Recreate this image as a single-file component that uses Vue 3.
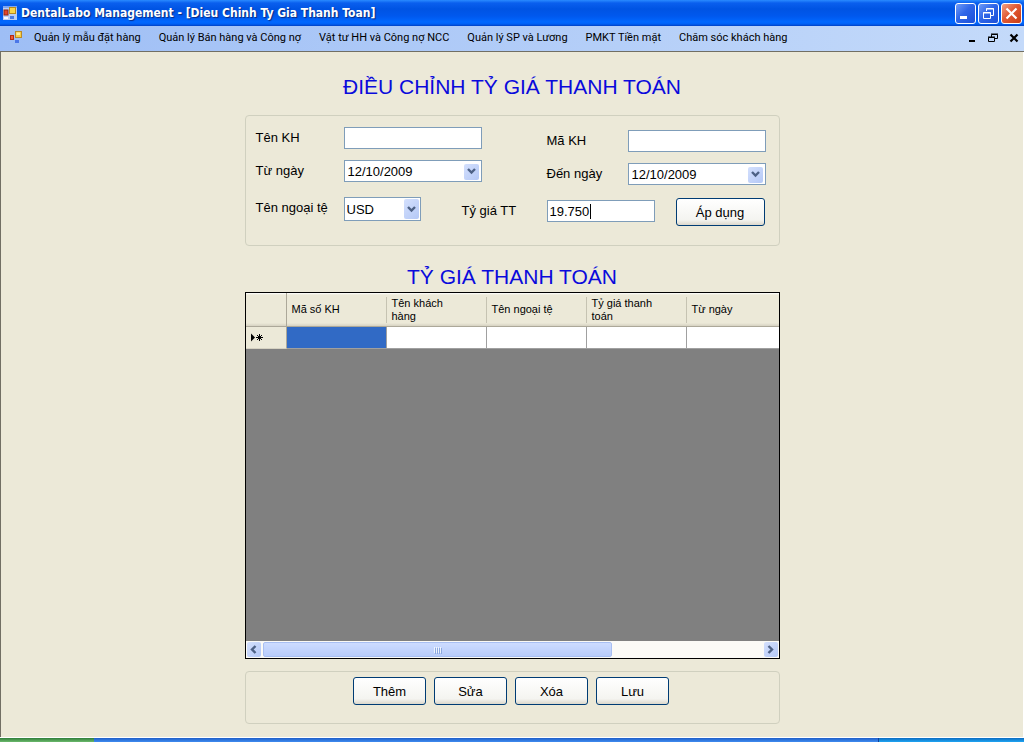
<script setup>
import { ref } from 'vue'

const menus = [
  'Quản lý mẫu đặt hàng',
  'Quản lý Bán hàng và Công nợ',
  'Vật tư HH và Công nợ NCC',
  'Quản lý SP và Lương',
  'PMKT Tiền mặt',
  'Chăm sóc khách hàng',
]
const columns = ['Mã số KH', 'Tên khách hàng', 'Tên ngoại tệ', 'Tỷ giá thanh toán', 'Từ ngày']
const actions = ['Thêm', 'Sửa', 'Xóa', 'Lưu']

const customerName = ref('')
const customerCode = ref('')
const fromDate = ref('12/10/2009')
const toDate = ref('12/10/2009')
const currency = ref('USD')
const rate = ref('19.750')
</script>

<template>
  <div class="window">
    <header class="titlebar">
      <svg class="app-icon" width="14" height="14" viewBox="0 0 14 14" aria-hidden="true">
        <rect width="14" height="14" fill="#b9cdf5" />
        <path d="M0 0H14V2H0Z" fill="#7fa6f0" />
        <rect x="1" y="4" width="4" height="5" fill="#e0442a" stroke="#8e2416" />
        <rect x="6.500" y="1.500" width="6" height="6" fill="#f9d54a" stroke="#b98a1c" />
        <rect x="7" y="10" width="4" height="3" fill="#4a7be6" />
        <path d="M1 11H5V13H1Z" fill="#f6f8ff" />
      </svg>
      <h1 class="title">DentalLabo Management - [Dieu Chinh Ty Gia Thanh Toan]</h1>
      <div class="captions">
        <button class="caption" type="button" aria-label="Minimize">
          <svg width="19" height="19" viewBox="0 0 19 19"><path d="M4 12H11V15H4Z" fill="#fff" /></svg>
        </button>
        <button class="caption" type="button" aria-label="Restore">
          <svg width="19" height="19" viewBox="0 0 19 19" fill="none" stroke="#fff">
            <path d="M7.500 7V4.500H14.500V11.500H12M7 5H15M4.500 8.500H11.500V14.500H4.500ZM4 9H12" />
          </svg>
        </button>
        <button class="caption close" type="button" aria-label="Close">
          <svg width="19" height="19" viewBox="0 0 19 19"><path d="M4.500 4.500L14.500 14.500M14.500 4.500L4.500 14.500" stroke="#fff" stroke-width="2.200" /></svg>
        </button>
      </div>
    </header>

    <nav class="menubar">
      <svg class="child-icon" width="14" height="13" viewBox="0 0 14 13" aria-hidden="true">
        <rect x="1.500" y="4.500" width="3" height="4" fill="#ee5a36" stroke="#b02c18" />
        <rect x="6.500" y="0.500" width="6" height="6" fill="#f7ce45" stroke="#b8892a" />
        <path d="M7.500 1.500H11V4H7.500Z" fill="#fdeea0" />
        <rect x="6" y="9" width="4" height="3" fill="#4b76e8" />
      </svg>
      <button v-for="m in menus" :key="m" class="menu" type="button">{{ m }}</button>
      <div class="child-controls">
        <button type="button" aria-label="Minimize child">
          <svg width="10" height="10" viewBox="0 0 10 10"><path d="M2 7H8V9H2Z" fill="#000" /></svg>
        </button>
        <button type="button" aria-label="Restore child">
          <svg width="10" height="10" viewBox="0 0 10 10" fill="none" stroke="#000">
            <path d="M3.500 4V1.500H9.500V5.500H7M3 1H10M0.500 4.500H6.500V8.500H0.500ZM0 4H7" />
          </svg>
        </button>
        <button type="button" aria-label="Close child">
          <svg width="10" height="10" viewBox="0 0 10 10"><path d="M1.500 1.500L8.500 8.500M8.500 1.500L1.500 8.500" stroke="#000" stroke-width="2.200" /></svg>
        </button>
      </div>
    </nav>

    <main class="client">
      <div class="form">
        <h2 class="heading">ĐIỀU CHỈNH TỶ GIÁ THANH TOÁN</h2>

        <section class="group fields">
          <label for="name">Tên KH</label>
          <input id="name" v-model="customerName" class="box wide" type="text" />
          <label class="lower" for="code">Mã KH</label>
          <input id="code" v-model="customerCode" class="box wide lower" type="text" />

          <label for="from">Từ ngày</label>
          <div class="box wide picker">
            <input id="from" v-model="fromDate" type="text" />
            <button class="drop" type="button" aria-label="Chọn từ ngày">
              <svg width="9" height="7" viewBox="0 0 9 7"><path d="M1 1L4.500 4.500L8 1" fill="none" stroke="#4d6185" stroke-width="2.400" /></svg>
            </button>
          </div>
          <label class="lower" for="to">Đến ngày</label>
          <div class="box wide picker lower">
            <input id="to" v-model="toDate" type="text" />
            <button class="drop" type="button" aria-label="Chọn đến ngày">
              <svg width="9" height="7" viewBox="0 0 9 7"><path d="M1 1L4.500 4.500L8 1" fill="none" stroke="#4d6185" stroke-width="2.400" /></svg>
            </button>
          </div>

          <label for="currency">Tên ngoại tệ</label>
          <div class="currency-cell">
            <div class="combo">
              <select id="currency" v-model="currency" class="box">
                <option>USD</option>
              </select>
              <span class="drop">
                <svg width="9" height="7" viewBox="0 0 9 7"><path d="M1 1L4.500 4.500L8 1" fill="none" stroke="#4d6185" stroke-width="2.400" /></svg>
              </span>
            </div>
            <label class="lower" for="rate">Tỷ giá TT</label>
          </div>
          <div class="rate-cell">
            <div class="box rate lower">
              <input id="rate" v-model="rate" type="text" size="4" />
              <span class="caret"></span>
            </div>
            <button class="push apply" type="button">Áp dụng</button>
          </div>
        </section>

        <h2 class="heading second">TỶ GIÁ THANH TOÁN</h2>

        <section class="datagrid">
          <table>
            <colgroup>
              <col class="c-head" />
              <col v-for="c in columns" :key="c" class="c-data" />
            </colgroup>
            <thead>
              <tr>
                <th class="corner"></th>
                <th v-for="c in columns" :key="c" scope="col"><div>{{ c }}</div></th>
              </tr>
            </thead>
            <tbody>
              <tr>
                <th class="rowhead" scope="row">
                  <svg width="14" height="10" viewBox="0 0 14 10" aria-label="Dòng mới">
                    <path d="M1 0.500L5 4.500L1 8.500Z" fill="#000" />
                    <path d="M9.500 1V8M6 4.500H13M7 2L12 7M12 2L7 7" stroke="#000" />
                  </svg>
                </th>
                <td v-for="(c, i) in columns" :key="c" :class="{ selected: i === 0 }"></td>
              </tr>
            </tbody>
          </table>
          <div class="void"></div>
          <div class="scrollbar">
            <button class="arrow" type="button" aria-label="Cuộn trái">
              <svg width="7" height="9" viewBox="0 0 7 9"><path d="M5.500 1L2 4.500L5.500 8" fill="none" stroke="#4d6185" stroke-width="2.400" /></svg>
            </button>
            <div class="track">
              <div class="thumb"><i></i><i></i><i></i><i></i></div>
            </div>
            <button class="arrow" type="button" aria-label="Cuộn phải">
              <svg width="7" height="9" viewBox="0 0 7 9"><path d="M1.500 1L5 4.500L1.500 8" fill="none" stroke="#4d6185" stroke-width="2.400" /></svg>
            </button>
          </div>
        </section>

        <section class="group actions">
          <button v-for="a in actions" :key="a" class="push" type="button">{{ a }}</button>
        </section>
      </div>
    </main>

    <footer class="taskbar">
      <div class="start"></div>
      <div class="tasks"></div>
      <div class="tray"></div>
    </footer>
  </div>
</template>

<style>
body {
  margin: 0;
}
</style>

<style scoped>
* {
  box-sizing: border-box;
}
.window {
  display: flex;
  flex-direction: column;
  min-height: 100vh;
  background: #ece9d8;
  color: #000;
  font-family: "Liberation Sans", Arial, sans-serif;
  font-size: 14px;
}
button,
input,
select {
  margin: 0;
  padding: 0;
  border: 0;
  color: inherit;
  font-family: inherit;
}
svg {
  display: block;
}

.titlebar {
  display: flex;
  align-items: center;
  height: 26px;
  padding: 0 2px 0 3px;
  background: linear-gradient(#2a8bff 0, #0a5fee 3px, #0054e3 9px, #0058ee 16px, #0068ff 22px, #0060f4 24px, #0040c4 26px);
}
.title {
  flex: 1;
  margin: 0 0 0 4px;
  color: #fff;
  font-family: "DejaVu Sans Condensed", "DejaVu Sans", sans-serif;
  font-size: 12px;
  font-weight: bold;
  line-height: 26px;
  white-space: nowrap;
  text-shadow: 1px 1px 1px #0a2a80;
}
.captions {
  display: flex;
  gap: 2px;
}
.caption {
  width: 21px;
  height: 21px;
  border: 1px solid #fff;
  border-radius: 3px;
  background: linear-gradient(135deg, #6f9bf8, #2f66e8 45%, #1c4fd8);
}
.caption.close {
  background: linear-gradient(135deg, #f0a184, #e25a35 45%, #c83c14);
}

.menubar {
  display: flex;
  align-items: center;
  height: 26px;
  padding: 0 5px 2px 9px;
  border-bottom: 1px solid #716f64;
  background: linear-gradient(90deg, #9ebef5, #c4dafa);
}
.child-icon {
  margin-right: 11px;
}
.menu {
  margin-right: 18px;
  background: none;
  font-family: Roboto, sans-serif;
  font-size: 11px;
  line-height: 22px;
  white-space: nowrap;
}
.child-controls {
  display: flex;
  gap: 11px;
  margin-left: auto;
}
.child-controls button {
  width: 10px;
  background: none;
}

.client {
  display: flex;
  flex: 1;
  justify-content: center;
  padding: 19px 0 13px 1px;
  border: solid #fff;
  border-width: 0 1px 1px 0;
  box-shadow: inset 1px 0 #716f64;
}
.form {
  display: flex;
  flex-direction: column;
  width: 535px;
}
.heading {
  margin: 0;
  color: #0a0adc;
  font-size: 21px;
  font-weight: normal;
  line-height: 32px;
  text-align: center;
}
.second {
  margin-top: 15px;
  line-height: 31px;
}
.group {
  border: 1px solid #d0d0bf;
  border-radius: 4px;
}
.fields {
  display: grid;
  grid-template-columns: 88px 203px 81px 1fr;
  grid-template-rows: 33px 37px 30px;
  align-items: start;
  margin-top: 12px;
  padding: 11px 10px 18px;
}
.fields label {
  font-size: 13px;
  line-height: 22px;
  white-space: nowrap;
}
.lower {
  margin-top: 3px;
}
.box {
  height: 22px;
  border: 1px solid #7f9db9;
  background: #fff;
  font-size: 13px;
}
input.box {
  padding: 0 3px;
}
.wide {
  width: 138px;
}
.picker {
  display: flex;
  align-items: center;
  padding: 1px 2px 0 3px;
}
.picker input {
  flex: 1;
  min-width: 0;
  font-size: 13px;
  line-height: 19px;
}
.drop {
  display: flex;
  align-items: center;
  justify-content: center;
  width: 15px;
  height: 16px;
  border-radius: 2px;
  background: linear-gradient(135deg, #d4e0fd, #b4c8f6);
}
.currency-cell {
  display: flex;
  gap: 41px;
}
.combo {
  position: relative;
  width: 77px;
}
.combo select {
  width: 100%;
  height: 24px;
  padding: 0 2px;
  border-radius: 0;
  appearance: none;
}
.combo .drop {
  position: absolute;
  top: 2px;
  right: 2px;
  height: 20px;
  pointer-events: none;
}
.rate-cell {
  display: flex;
  grid-column: 3 / 5;
  gap: 21px;
}
.rate {
  display: flex;
  align-items: center;
  width: 108px;
  padding: 0 2px;
}
.rate input {
  width: 40px;
  font-size: 13px;
}
.caret {
  width: 1px;
  height: 15px;
  background: #000;
}
.push {
  width: 73px;
  height: 28px;
  border: 1px solid #003c74;
  border-radius: 3px;
  background: linear-gradient(#fff, #f4f4f0 80%, #dcd8cc);
  font-size: 13px;
}
.apply {
  width: 89px;
  margin-top: 1px;
}

.datagrid {
  display: flex;
  flex: 1;
  flex-direction: column;
  min-height: 160px;
  overflow: hidden;
  border: 1px solid #000;
  background: #808080;
}
table {
  width: 541px;
  border-collapse: separate;
  border-spacing: 0;
  table-layout: fixed;
  font-size: 11px;
}
.c-head {
  width: 41px;
}
.c-data {
  width: 100px;
}
thead th {
  height: 34px;
  padding: 0;
  border-bottom: 1px solid #aca899;
  background: linear-gradient(#fff 0, #ece9d8 2px, #ece9d8 30px, #d6d2c2 33px);
  font-weight: normal;
  line-height: 13px;
  text-align: left;
}
thead th div {
  display: flex;
  align-items: center;
  height: 26px;
  padding: 0 28px 0 5px;
  border-right: 1px solid #c6c3b2;
  box-shadow: 1px 0 #fff;
}
thead th:nth-child(n + 4) div {
  padding-right: 20px;
}
.corner,
.rowhead {
  border-right: 1px solid #aca899;
}
.rowhead {
  padding: 0 0 0 4px;
  border-bottom: 1px solid #d6d2c2;
  background: #ece9d8;
}
tbody td {
  height: 22px;
  padding: 0;
  border-right: 1px solid #a0a0a0;
  border-bottom: 1px solid #a0a0a0;
  background: #fff;
}
tbody td.selected {
  background: #316ac5;
}
.void {
  flex: 1;
}
.scrollbar {
  display: flex;
  height: 17px;
  padding: 1px;
  background: #fbfaf6;
}
.arrow {
  display: flex;
  align-items: center;
  justify-content: center;
  width: 14px;
  border-radius: 2px;
  background: linear-gradient(135deg, #d4e0fd, #b4c8f6);
}
.track {
  flex: 1;
  padding: 0 2px;
}
.thumb {
  display: flex;
  align-items: center;
  justify-content: center;
  gap: 1px;
  width: 70%;
  height: 15px;
  border: 1px solid #a8bff2;
  border-radius: 2px;
  background: linear-gradient(#cddcff, #b8ccfb);
}
.thumb i {
  width: 1px;
  height: 6px;
  background: #eef4fe;
  box-shadow: 1px 1px #8ca8e0;
}
.actions {
  display: flex;
  justify-content: center;
  gap: 8px;
  height: 53px;
  margin-top: 12px;
  padding: 5px 2px 0 0;
}

.taskbar {
  display: flex;
  height: 4px;
}
.start {
  width: 94px;
  background: linear-gradient(#2f7d3a, #6cba6c);
}
.tasks {
  flex: 1;
  background: linear-gradient(#1f5fc8, #3f8cf0);
}
.tray {
  width: 146px;
  border-left: 1px solid #12409c;
  background: linear-gradient(#0c6cc0, #1fa5f2);
}
</style>
